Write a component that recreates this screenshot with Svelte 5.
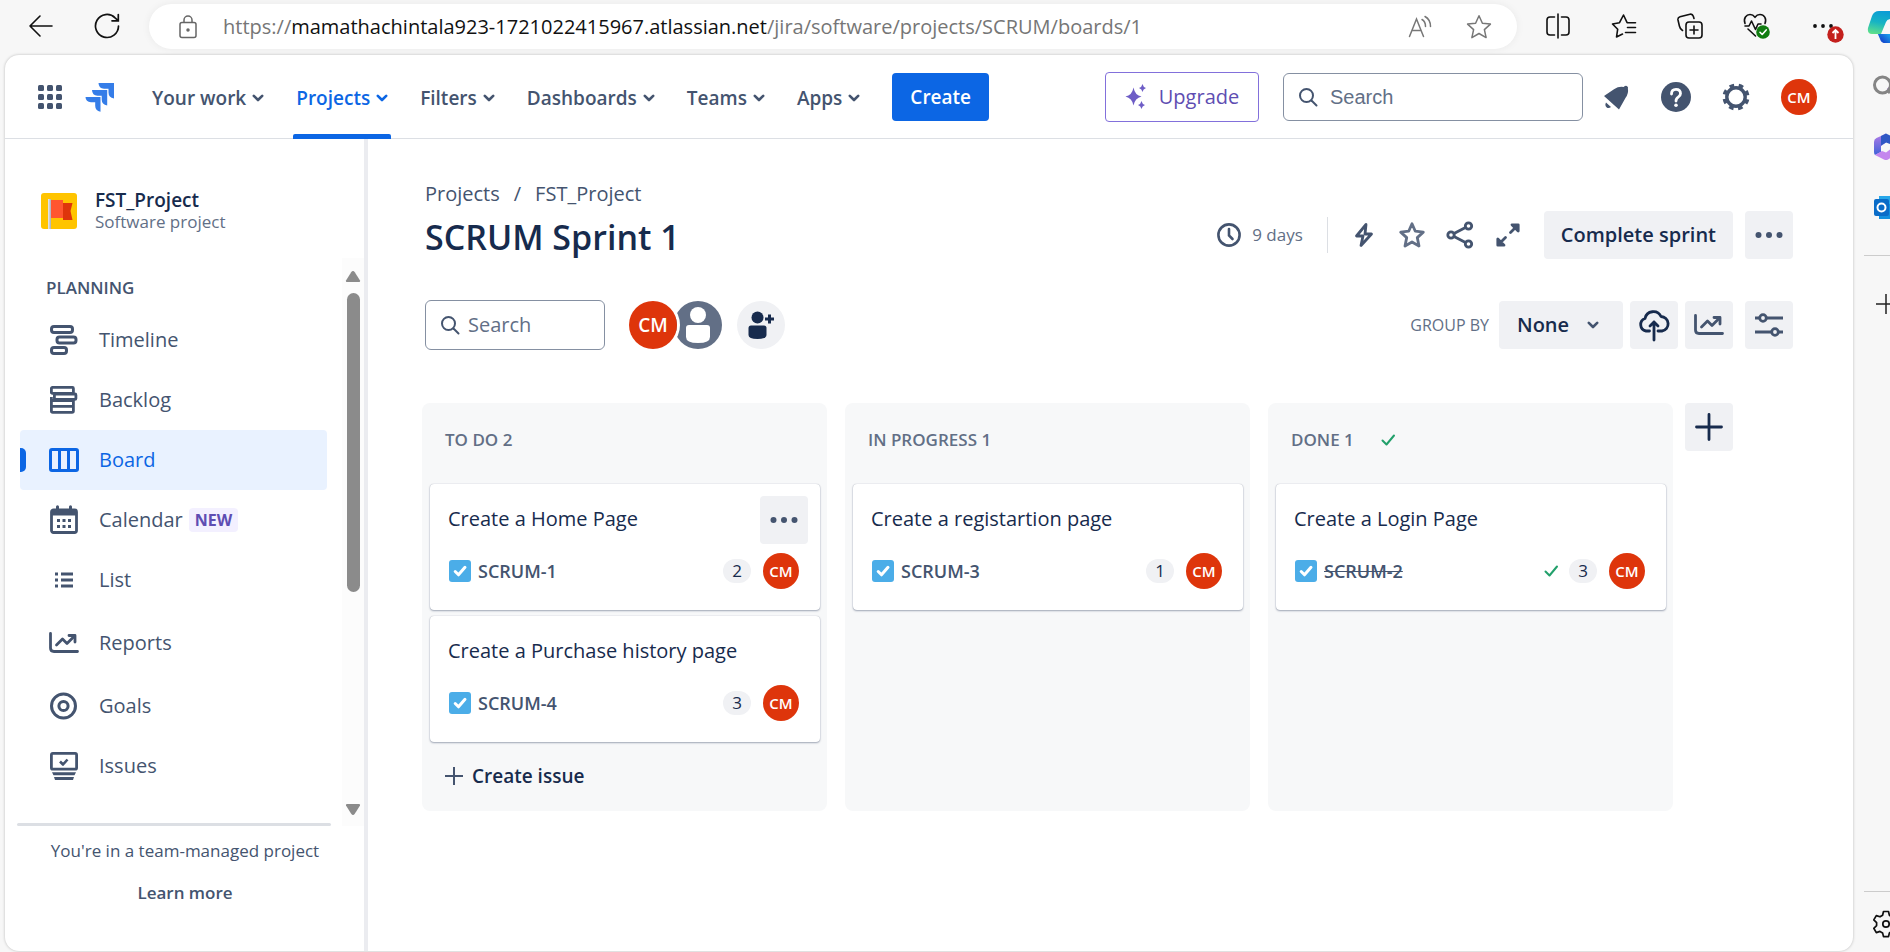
<script>
  const menus = [
    { label: 'Your work' },
    { label: 'Projects', active: true },
    { label: 'Filters' },
    { label: 'Dashboards' },
    { label: 'Teams' },
    { label: 'Apps' }
  ];

  const sections = [
    { label: 'Timeline', icon: 'timeline' },
    { label: 'Backlog', icon: 'backlog' },
    { label: 'Board', icon: 'board', active: true },
    { label: 'Calendar', icon: 'calendar', badge: 'NEW' },
    { label: 'List', icon: 'list' },
    { label: 'Reports', icon: 'reports', spaced: true },
    { label: 'Goals', icon: 'goals' },
    { label: 'Issues', icon: 'issues' }
  ];

  const columns = [
    {
      name: 'TO DO',
      create: true,
      cards: [
        { title: 'Create a Home Page', key: 'SCRUM-1', points: 2, menu: true },
        { title: 'Create a Purchase history page', key: 'SCRUM-4', points: 3 }
      ]
    },
    { name: 'IN PROGRESS', cards: [{ title: 'Create a registartion page', key: 'SCRUM-3', points: 1 }] },
    { name: 'DONE', done: true, cards: [{ title: 'Create a Login Page', key: 'SCRUM-2', points: 3, done: true }] }
  ];
</script>

{#snippet chevron()}
  <svg class="chevron" width="12" height="8" viewBox="0 0 12 8"><path d="M1.8 1.8 6 6l4.2-4.2" fill="none" stroke="currentColor" stroke-width="2.6" stroke-linecap="round" stroke-linejoin="round" /></svg>
{/snippet}

{#snippet dots()}
  <svg width="28" height="8" viewBox="0 0 28 8" fill="currentColor"><circle cx="3.5" cy="4" r="3" /><circle cx="14" cy="4" r="3" /><circle cx="24.5" cy="4" r="3" /></svg>
{/snippet}

{#snippet tick()}
  <svg width="16" height="16" viewBox="0 0 16 16"><path d="m2.500 8.500 4 4 7.500-9" fill="none" stroke="#22a06b" stroke-width="2" stroke-linecap="round" stroke-linejoin="round" /></svg>
{/snippet}

{#snippet chart()}
  <svg width="30" height="24" viewBox="0 0 30 24" fill="none" stroke="currentColor" stroke-width="2.8" stroke-linecap="round" stroke-linejoin="round"><path d="M1.500 2.500V17q0 3.500 3.500 3.500h23.500" /><path d="m7.500 14 6-6 4.500 4.500 7-7" /><path d="M20 4.500h6V11" /></svg>
{/snippet}

{#snippet magnifier()}
  <svg width="20" height="20" viewBox="0 0 20 20" fill="none" stroke="currentColor" stroke-width="2" stroke-linecap="round"><circle cx="8.5" cy="8.5" r="6.500" /><path d="m13.500 13.500 5 5" /></svg>
{/snippet}

{#snippet navIcon(name)}
  {#if name === 'reports'}
    {@render chart()}
  {:else}
    <svg width="30" height="30" viewBox="0 0 30 30" fill="none" stroke="currentColor" stroke-width="3" stroke-linejoin="round">
      {#if name === 'timeline'}
        <rect x="2.500" y="1.500" width="21" height="6" rx="2.500" /><rect x="8" y="12" width="19" height="6" rx="2.500" /><rect x="2.500" y="22.500" width="15" height="6" rx="2.500" />
      {:else if name === 'backlog'}
        <g stroke-width="2.8"><rect x="2.400" y="2.400" width="22" height="6" rx="1" /><rect x="5.400" y="9" width="21.500" height="5.400" rx="1" /><path d="M2.400 12v14q0 1.400 1.400 1.400H23q1.400 0 1.400-1.400V15M2.400 15.500H24M2.400 21.400h22" /></g>
      {:else if name === 'board'}
        <rect x="1.500" y="4.500" width="27" height="21" rx="1.500" /><path d="M10.500 4.500v21m9-21v21" />
      {:else if name === 'calendar'}
        <rect x="2.500" y="5" width="25" height="22.500" rx="2" stroke-width="2.8" /><path d="M3 7.500h24" stroke-width="6" /><path d="M8.500 1.800V6m13-4.200V6" stroke-linecap="round" /><path d="M8 15.500h3m2.500 0h3m2.500 0h3M8 21.500h3m2.500 0h3m2.500 0h3" />
      {:else if name === 'list'}
        <path d="M6 9h3M6 15h3M6 21h3M12 9h12m-12 6h12m-12 6h12" stroke-width="2.8" />
      {:else if name === 'goals'}
        <circle cx="14.500" cy="15" r="12" /><circle cx="14.500" cy="15" r="4.600" />
      {:else}
        <rect x="2.400" y="2.400" width="25.200" height="15.800" rx="1.500" stroke-width="2.8" /><path d="m11 10.500 3 3 4.500-5" stroke-width="2.600" /><path d="M3 21.300h24l-1.500 3h-21zM5 26h20l-1 3H6z" fill="currentColor" stroke="none" />
      {/if}
    </svg>
  {/if}
{/snippet}

{#snippet face()}
  <span class="face">CM</span>
{/snippet}

<div class="window">
  <header class="toolbar">
    <button class="tool" aria-label="Back"><svg width="26" height="26" viewBox="0 0 26 26" fill="none" stroke="#111" stroke-width="1.600" stroke-linecap="round" stroke-linejoin="round"><path d="M24 13H2M12 3 2 13l10 10" /></svg></button>
    <button class="tool" aria-label="Reload"><svg width="26" height="26" viewBox="0 0 26 26" fill="none" stroke="#111" stroke-width="1.700" stroke-linecap="round"><path d="M24.500 13a11.500 11.500 0 1 1-3.400-8.200L24 7.500M24.300 1.500v6.300H18" /></svg></button>
    <div class="address">
      <svg width="20" height="24" viewBox="0 0 20 24" fill="none" stroke="#666" stroke-width="1.500"><rect x="2" y="7.500" width="16" height="15" rx="2" /><path d="M6 7.500V5a4 4 0 0 1 8 0v2.500" /><circle cx="10" cy="15" r="1" fill="#666" /></svg>
      <span class="url">https://<b>mamathachintala923-1721022415967.atlassian.net</b>/jira/software/projects/SCRUM/boards/1</span>
      <button aria-label="Read aloud"><svg width="24" height="24" viewBox="0 0 24 24" fill="none" stroke="#777" stroke-width="1.500" stroke-linecap="round"><path d="M1.500 21.500 8.500 4l7 17.500M4 15.500h9M14 4.500q3.500 2 3.500 7M17 1.500q5.500 3 5.500 10" /></svg></button>
      <button aria-label="Add to favorites"><svg width="26" height="26" viewBox="0 0 26 26" fill="none" stroke="#777" stroke-width="1.500" stroke-linejoin="round"><path d="m13 1.800 3.400 7.400 8 .9-6 5.500 1.700 8L13 19.500l-7.100 4.100 1.700-8-6-5.500 8-.9z" /></svg></button>
    </div>
    <div class="tools">
      <button class="tool" aria-label="Split screen"><svg width="26" height="26" viewBox="0 0 26 26" fill="none" stroke="#111" stroke-width="1.600" stroke-linecap="round"><path d="M9.500 4H5Q2 4 2 7v12q0 3 3 3h4.500M16.500 4H21q3 0 3 3v12q0 3-3 3h-4.500M13 1v24" /></svg></button>
      <button class="tool" aria-label="Favorites"><svg width="26" height="26" viewBox="0 0 26 26" fill="none" stroke="#111" stroke-width="1.600" stroke-linecap="round" stroke-linejoin="round"><path d="M11.500 21 5.500 24l1.200-7.800L1.500 11l7-1.300L12.500 2l3.600 7.700h8.400M16.500 14.500h8M14.500 19.500h10" /></svg></button>
      <button class="tool" aria-label="Collections"><svg width="26" height="26" viewBox="0 0 26 26" fill="none" stroke="#111" stroke-width="1.600" stroke-linecap="round"><rect x="9" y="9" width="16" height="16" rx="3" /><path d="M17 13v8m-4-4h8M5.500 17.500Q3 16 2.400 13L1 7Q.5 4.500 3 3.800l10-2.600q2.500-.5 3.300 2l.7 2.300" /></svg></button>
      <button class="tool" aria-label="Browser essentials"><svg width="28" height="28" viewBox="0 0 28 28" fill="none" stroke="#111" stroke-width="1.600" stroke-linecap="round" stroke-linejoin="round"><path d="M3 11.500C1 6 4.500 2.500 8 2.500q3 0 5 2.800 2-2.800 5-2.800c4 0 7 4 5 9M3 14h4l2.500-5 4 8.500L16 12h3M6 17l7.500 7" /><circle cx="21" cy="20" r="6.800" fill="#107c10" stroke="none" /><path d="m18 20.300 2.200 2.200 4-4.600" stroke="#fff" /></svg></button>
      <button class="tool" aria-label="Settings and more"><svg width="48" height="34" viewBox="0 0 48 34"><g fill="#111"><circle cx="17" cy="17" r="1.900" /><circle cx="25" cy="17" r="1.900" /><circle cx="33" cy="17" r="1.900" /></g><circle cx="37.500" cy="25.500" r="8.200" fill="#c4201d" /><path d="M37.500 30v-9m-3 3 3-3 3 3" fill="none" stroke="#fff" stroke-width="1.800" /></svg></button>
    </div>
    <button class="copilot" aria-label="Copilot">
      <svg width="40" height="34" viewBox="0 0 40 34">
        <defs>
          <linearGradient id="lagoon" x1="0.5" y1="0" x2="0.2" y2="1"><stop offset="0" stop-color="#0a9bd6" /><stop offset="0.5" stop-color="#16b3c4" /><stop offset="1" stop-color="#5fe08a" /></linearGradient>
          <linearGradient id="deep" x1="0" y1="1" x2="1" y2="0.3"><stop offset="0" stop-color="#1438c8" /><stop offset="1" stop-color="#18aef0" /></linearGradient>
        </defs>
        <path d="M10 22h24v11H18q-4 0-5-4z" fill="url(#deep)" />
        <path d="M12 1h24l-9 23H5q-5 0-4-6L5 6q2-5 7-5z" fill="url(#lagoon)" />
        <path d="M14 24 19 12q1-3 5-3h9l-9 15z" fill="#f7f7f7" />
        <path d="M15 24h12v9h-9q-3 0-4-4z" fill="url(#deep)" />
      </svg>
    </button>
  </header>

  <div class="body">
    <div class="page">
      <nav class="topnav">
        <button class="plain switcher" aria-label="App switcher">
          <svg width="24" height="24" viewBox="0 0 24 24" fill="#44546f">
            {#each [0, 9, 18] as y}{#each [0, 9, 18] as x}<rect {x} {y} width="6" height="6" rx="1.500" />{/each}{/each}
          </svg>
        </button>
        <a class="logo" href="#home" aria-label="Jira">
          <svg width="30" height="30" viewBox="0 0 30 30" fill="#357de8"><path d="M13.500 1H29v15.500q-5.500-.8-5.500-6V6.800H19q-5.300-.3-5.500-5.800z" /><path d="M7 8h15.200v15.500q-5.500-.8-5.500-6v-3.700h-4.200Q7.200 13.500 7 8z" /><path d="M.5 15h15v14.800q-5.300-.8-5.300-6v-3.500H6Q.7 20 .5 15z" /></svg>
        </a>
        <div class="menus">
          {#each menus as m}
            <button class="menu" class:active={m.active}>{m.label}{@render chevron()}</button>
          {/each}
        </div>
        <button class="create">Create</button>
        <button class="upgrade">
          <svg width="22" height="26" viewBox="0 0 22 26" fill="#6e5dc6"><path d="M8.500 3.500q1.500 8 8 9-6.500 1.500-8 9-1.500-7.500-8-9 6.500-1 8-9z" /><path d="M17.500 0q.6 3 3.500 4-2.900 1-3.500 4-.6-3-3.500-4 2.900-1 3.500-4zM16.500 17q.6 3 3.500 4-2.900 1-3.500 4-.6-3-3.500-4 2.900-1 3.500-4z" /></svg>
          Upgrade
        </button>
        <label class="search global">{@render magnifier()}<input type="text" placeholder="Search" aria-label="Search" /></label>
        <button class="plain spot" aria-label="Notifications"><svg width="28" height="28" viewBox="0 0 28 28" fill="#44546f"><path d="M25.200 3.200q1.300 1.300.7 2.600.9 4.500-2.300 9L17 26.500 2 13l10-6.800q5-3.200 9.600-2.200 2.200-2 3.600-.8z" /><path d="M4 19.500 9 24q-2.500 2-4.500.2T4 19.500z" /></svg></button>
        <button class="plain spot" aria-label="Help"><svg width="30" height="30" viewBox="0 0 30 30"><circle cx="15" cy="15" r="15" fill="#44546f" /><path d="M10.500 12q0-4.700 4.500-4.700t4.500 4.200q0 2.200-2.300 3.600-2.200 1.300-2.200 4" fill="none" stroke="#fff" stroke-width="2.800" stroke-linecap="round" /><circle cx="15" cy="23.300" r="1.800" fill="#fff" /></svg></button>
        <button class="plain spot" aria-label="Settings">
          <svg width="28" height="28" viewBox="0 0 28 28" fill="none" stroke="#44546f"><circle cx="14" cy="14" r="9.200" stroke-width="3.400" /><circle cx="14" cy="14" r="11.800" stroke-width="3.400" stroke-dasharray="4.600 4.667" stroke-dashoffset="-2.400" /></svg>
        </button>
        <button class="plain profile" aria-label="Profile">{@render face()}</button>
      </nav>

      <div class="content">
        <aside class="side">
          <div class="project">
            <svg width="36" height="36" viewBox="0 0 36 36"><rect width="36" height="36" rx="3" fill="#ffc400" /><path d="M7 6h3v30H7z" fill="#dfe1e6" /><path d="M8.500 6H10v30H8.500z" fill="#b3bac5" /><path d="M22 10h9.500l-2 8 2 9h-9.500z" fill="#de350b" /><path d="M10 7h12v18H10z" fill="#ff5630" /></svg>
            <div><strong>FST_Project</strong><small>Software project</small></div>
          </div>
          <div class="scroller">
            <div class="sections">
              <h2>PLANNING</h2>
              {#each sections as s}
                <a class="section" class:active={s.active} class:spaced={s.spaced} href="#{s.icon}">
                  <span class="glyph">{@render navIcon(s.icon)}</span>{s.label}{#if s.badge}<span class="new">{s.badge}</span>{/if}
                </a>
              {/each}
            </div>
            <div class="track">
              <svg width="16" height="12" viewBox="0 0 16 12"><path d="M8 0q1 0 1.800 1.200L15 9.500q.6 1.500-1 1.500H2q-1.600 0-1-1.500l5.200-8.300Q7 0 8 0z" fill="#8b8b8b" /></svg>
              <span class="thumb"></span>
              <svg width="16" height="12" viewBox="0 0 16 12"><path d="M8 12q1 0 1.800-1.200L15 2.500Q15.600 1 14 1H2Q.4 1 1 2.500l5.200 8.300Q7 12 8 12z" fill="#8b8b8b" /></svg>
            </div>
          </div>
          <div class="managed">
            <span>You're in a team-managed project</span>
            <a href="#learn">Learn more</a>
          </div>
        </aside>

        <main>
          <div class="crumbs"><a href="#projects">Projects</a><span>/</span><a href="#project">FST_Project</a></div>
          <div class="heading">
            <h1>SCRUM Sprint 1</h1>
            <div class="days">
              <svg width="24" height="24" viewBox="0 0 24 24" fill="none" stroke="#44546f" stroke-width="2.600" stroke-linecap="round"><circle cx="12" cy="12" r="10.600" /><path d="M12 6v6.500l3.500 3.500" /></svg>
              9 days
            </div>
            <div class="marks">
              <button class="plain" aria-label="Automation"><svg width="24" height="26" viewBox="0 0 24 26" fill="none" stroke="#44546f" stroke-width="2.800" stroke-linejoin="round"><path d="M14 2.500 4.500 14H11l-2 9.500L19.500 12H13z" /></svg></button>
              <button class="plain" aria-label="Star"><svg width="28" height="28" viewBox="0 0 28 28" fill="none" stroke="#626f86" stroke-width="2.800" stroke-linejoin="round"><path d="m14 2.800 3.300 7.400 8 .9-6 5.500 1.700 8.400-7-4-7 4 1.700-8.400-6-5.500 8-.9z" /></svg></button>
              <button class="plain" aria-label="Share"><svg width="28" height="28" viewBox="0 0 28 28" fill="none" stroke="#44546f" stroke-width="2.800"><circle cx="5" cy="14" r="3.200" /><circle cx="22.500" cy="5" r="3.200" /><circle cx="22.500" cy="23" r="3.200" /><path d="m8 12.500 11.500-6M8 15.500l11.500 6" /></svg></button>
              <button class="plain" aria-label="Full screen"><svg width="26" height="26" viewBox="0 0 26 26" fill="none" stroke="#44546f" stroke-width="2.800" stroke-linecap="round" stroke-linejoin="round"><path d="m15.500 10.500 6-6M17 2.800h6.200V9zM10.500 15.500l-6 6M2.800 17v6.200H9z" /></svg></button>
            </div>
            <div class="actions">
              <button class="solid">Complete sprint</button>
              <button class="solid square" aria-label="More actions">{@render dots()}</button>
            </div>
          </div>

          <div class="filters">
            <label class="search local">{@render magnifier()}<input type="text" placeholder="Search" aria-label="Search board" /></label>
            <div class="people">
              <button class="plain big" aria-label="Filter by CM">{@render face()}</button>
              <button class="plain nobody" aria-label="Unassigned"><svg width="48" height="48" viewBox="0 0 48 48"><circle cx="24" cy="24" r="24" fill="#626f86" /><circle cx="24" cy="14" r="8" fill="#fff" /><path d="M12 27q0-3 3-3h18q3 0 3 3v9q0 6-12 6t-12-6z" fill="#fff" /></svg></button>
              <button class="plain invite" aria-label="Add people"><svg width="28" height="28" viewBox="0 0 28 28" fill="#172b4d"><circle cx="10.500" cy="6.500" r="6" /><path d="M1.500 17q0-2.500 2.500-2.500h13q2.500 0 2.500 2.500v7q0 4-9 4t-9-4z" /><path d="M22.500 3.500v9M18 8h9" stroke="#172b4d" stroke-width="3" /></svg></button>
            </div>
            <label class="group" for="group">GROUP BY</label>
            <div class="picker">
              <select id="group"><option>None</option></select>
              {@render chevron()}
            </div>
            <button class="solid square dark" aria-label="Releases"><svg width="32" height="34" viewBox="0 0 32 34" fill="none" stroke="currentColor" stroke-width="2.800" stroke-linecap="round" stroke-linejoin="round"><path d="M11.500 23H8a6.500 6.500 0 0 1-1-12.500A8.500 8.500 0 0 1 23 8.500 7.300 7.300 0 0 1 24 23h-4M16 32V14m-4 4 4-4 4 4" /></svg></button>
            <button class="solid square" aria-label="Insights">{@render chart()}</button>
            <button class="solid square last" aria-label="View settings"><svg width="28" height="26" viewBox="0 0 28 26" fill="none" stroke="currentColor" stroke-width="2.800"><path d="M0 6h4.500m7 0H28M0 20h16.500m7 0H28" /><circle cx="8" cy="6" r="3.300" /><circle cx="20" cy="20" r="3.300" /></svg></button>
          </div>

          <div class="board">
            {#each columns as c}
              <section class="column">
                <h3>{c.name} {c.cards.length}{#if c.done}{@render tick()}{/if}</h3>
                {#each c.cards as card}
                  <article class="card">
                    <div class="top">
                      <span>{card.title}</span>
                      {#if card.menu}<button class="solid square" aria-label="Card actions">{@render dots()}</button>{/if}
                    </div>
                    <div class="meta">
                      <svg width="22" height="22" viewBox="0 0 22 22"><rect width="22" height="22" rx="3" fill="#4bade8" /><path d="m6.200 11.500 3.300 3.300 6.500-7.500" fill="none" stroke="#fff" stroke-width="3" stroke-linecap="round" stroke-linejoin="round" /></svg>
                      <a href="#{card.key}" class:struck={card.done}>{card.key}</a>
                      {#if card.done}{@render tick()}{/if}
                      <span class="points">{card.points}</span>
                      {@render face()}
                    </div>
                  </article>
                {/each}
                {#if c.create}
                  <button class="plain issue"><svg width="18" height="18" viewBox="0 0 18 18" stroke="#44546f" stroke-width="2"><path d="M9 0v18M0 9h18" /></svg>Create issue</button>
                {/if}
              </section>
            {/each}
            <button class="solid square dark add" aria-label="Create column"><svg width="28" height="28" viewBox="0 0 28 28" stroke="currentColor" stroke-width="2.800" stroke-linecap="round"><path d="M14 1.500v25M1.500 14h25" /></svg></button>
          </div>
        </main>
      </div>
    </div>

    <aside class="dock">
      <button class="app" aria-label="Search"><svg width="26" height="26" viewBox="0 0 26 26" fill="none" stroke-width="3"><path d="m15 15 8 8" stroke="#a06bd0" /><circle cx="9.500" cy="12" r="8" stroke="#858585" /><path d="m14.500 17.500 2.500 2.500" stroke="#858585" /></svg></button>
      <button class="app" aria-label="Microsoft 365">
        <svg width="26" height="28" viewBox="0 0 26 28"><defs><linearGradient id="hex" x1="0" y1="0" x2="0" y2="1"><stop offset="0" stop-color="#b57be8" /><stop offset="1" stop-color="#3f63d8" /></linearGradient></defs><path d="M8 3 13 .5v9L8 13v6l-6 3q-1-1-1-3V9q0-3 2.500-4z" fill="url(#hex)" /><path d="m13 .5 9 4.500q3 1.500 3 4v8l-8-2V11l-4-1.500-5 3V3z" fill="#2f58c4" /><path d="m2 22 7-4 4 1.500 4-3 8 1q0 3-3 5l-7 4q-2 1-4 0z" fill="#c487ee" /></svg>
      </button>
      <button class="app" aria-label="Outlook"><svg width="26" height="26" viewBox="0 0 26 26"><path d="M6 1h18v12H6z" fill="#28a8ea" /><path d="M6 9h19v15H6z" fill="#1490df" /><rect x="1" y="4" width="15" height="17" rx="2" fill="#0a6cc8" /><circle cx="8.500" cy="12.500" r="4" fill="none" stroke="#fff" stroke-width="2" /></svg></button>
      <hr />
      <button class="app" aria-label="Customize"><svg width="22" height="22" viewBox="0 0 22 22" stroke="#222" stroke-width="1.500"><path d="M11 1v20M1 11h20" /></svg></button>
      <hr class="low" />
      <button class="app cog" aria-label="Dock settings"><svg width="26" height="28" viewBox="0 0 26 28" fill="none" stroke="#111" stroke-width="1.700" stroke-linejoin="round"><path d="M10.500 1.500h5l.9 3.800 2.600 1.500 3.700-1.200 2.500 4.300-2.800 2.700v3l2.800 2.700-2.500 4.300-3.700-1.200-2.600 1.500-.9 3.700h-5l-.9-3.700L7 21.400l-3.700 1.200L.8 18.300l2.800-2.700v-3L.8 9.900l2.500-4.300L7 6.800l2.600-1.500z" /><circle cx="13" cy="14" r="3.200" /></svg></button>
    </aside>
  </div>
</div>

<style>
  :global(body) {
    background: #f7f7f7;
  }
  .window,
  .window :global(*) {
    box-sizing: border-box;
  }
  .window {
    min-height: 100vh;
    display: flex;
    flex-direction: column;
    overflow: hidden;
    font-family: 'Open Sans', 'Noto Sans', sans-serif;
    font-size: 20px;
    line-height: 24px;
    color: #172b4d;
  }
  button,
  input,
  select {
    font: inherit;
    color: inherit;
    border: 0;
    padding: 0;
    background: none;
  }
  button,
  .glyph,
  .logo {
    display: flex;
    align-items: center;
    justify-content: center;
  }
  a {
    color: inherit;
    text-decoration: none;
  }
  svg {
    flex: none;
    display: block;
  }

  .toolbar {
    height: 54px;
    display: flex;
    align-items: flex-start;
    padding-left: 8px;
  }
  .tool {
    width: 66px;
    height: 52px;
    flex: none;
  }
  .address {
    flex: 1;
    min-width: 0;
    height: 45px;
    margin: 4px 8px 0 9px;
    padding: 0 25px 0 29px;
    display: flex;
    align-items: center;
    gap: 34px;
    background: #fff;
    border-radius: 23px;
    box-shadow: 0 0 8px rgba(0, 0, 0, 0.06);
  }
  .url {
    flex: 1;
    min-width: 0;
    overflow: hidden;
    white-space: nowrap;
    line-height: 32px;
    color: #767676;
    margin-left: -9px;
  }
  .url b {
    font-weight: 400;
    color: #111;
  }
  .tools {
    display: flex;
    flex: none;
  }
  .copilot {
    width: 35px;
    height: 54px;
    flex: none;
    justify-content: flex-start;
    padding-left: 12px;
    overflow: hidden;
  }

  .body {
    flex: 1;
    display: flex;
  }
  .page {
    flex: 1;
    min-width: 0;
    margin: 1px 0 1px 5px;
    display: flex;
    flex-direction: column;
    background: #fff;
    border-radius: 14px;
    box-shadow: 0 0 3px rgba(0, 0, 0, 0.25);
  }
  .topnav {
    height: 84px;
    display: flex;
    align-items: center;
    border-bottom: 1px solid #dcdfe4;
    color: #44546f;
    padding: 1px 0 0 33px;
    font-size: 19px;
  }
  .logo {
    margin: 0 34px 0 23px;
  }
  .menus {
    display: flex;
    align-self: stretch;
    gap: 26px;
  }
  .menu {
    position: relative;
    padding: 2px 3px 0;
    gap: 6px;
    font-weight: 600;
    white-space: nowrap;
  }
  .menu.active {
    color: #0c66e4;
  }
  .menu.active::after {
    content: '';
    position: absolute;
    left: 0;
    right: 0;
    bottom: -1px;
    height: 5px;
    background: #0c66e4;
    border-radius: 2px 2px 0 0;
  }
  .create {
    height: 48px;
    padding: 0 18px;
    margin-left: 29px;
    border-radius: 4px;
    background: #0c66e4;
    color: #fff;
    font-weight: 600;
  }
  .upgrade {
    height: 50px;
    width: 154px;
    margin-left: auto;
    gap: 12px;
    border: 1px solid #8270db;
    border-radius: 4px;
    color: #5e4db2;
    font-size: 20px;
  }
  .search {
    display: flex;
    align-items: center;
    border: 1px solid #8590a2;
    border-radius: 6px;
    color: #44546f;
  }
  .search input {
    width: 100%;
    min-width: 0;
    outline: none;
  }
  .search input::placeholder {
    color: #626f86;
    opacity: 1;
  }
  .global {
    width: 300px;
    height: 48px;
    margin: 0 3px 0 24px;
    padding: 0 14px;
    gap: 12px;
    font-family: 'Liberation Sans', sans-serif;
    font-size: 20px;
  }
  .plain {
    flex: none;
  }
  .spot {
    width: 60px;
    height: 60px;
  }
  .profile {
    margin: 0 36px 0 15px;
  }
  .face {
    width: 36px;
    height: 36px;
    flex: none;
    display: flex;
    align-items: center;
    justify-content: center;
    border-radius: 50%;
    background: #de350b;
    color: #fff;
    font-size: 15px;
    font-weight: 600;
  }

  .content {
    flex: 1;
    display: flex;
  }
  .side {
    width: 363px;
    flex: none;
    display: flex;
    flex-direction: column;
    border-right: 4px solid #ebecf0;
    color: #44546f;
  }
  .project {
    display: flex;
    align-items: center;
    gap: 18px;
    padding: 50px 0 25px 36px;
  }
  .project strong,
  .project small {
    display: block;
    line-height: 22px;
  }
  .project strong {
    font-size: 19px;
    font-weight: 600;
    color: #172b4d;
  }
  .project small {
    font-size: 17px;
    color: #626f86;
  }
  .scroller {
    flex: 1;
    display: flex;
  }
  .sections {
    flex: 1;
    padding: 18px 15px 28px;
  }
  h2 {
    margin: 0 0 10px 26px;
    font-size: 17px;
    font-weight: 600;
  }
  .section {
    position: relative;
    height: 60px;
    display: flex;
    align-items: center;
    padding-left: 29px;
    border-radius: 4px;
    overflow: hidden;
  }
  .section.spaced {
    margin: 3px 0;
  }
  .glyph {
    width: 30px;
    margin-right: 20px;
  }
  .section.active {
    color: #0c66e4;
    background: #e9f2ff;
  }
  .section.active::before {
    content: '';
    position: absolute;
    left: 0;
    width: 6px;
    height: 24px;
    background: #0c66e4;
    border-radius: 0 5px 5px 0;
  }
  .new {
    margin-left: 6px;
    padding: 0 6px;
    border-radius: 4px;
    background: #f3f0ff;
    color: #5e4db2;
    font-size: 16px;
    font-weight: 700;
  }
  .track {
    width: 22px;
    display: flex;
    flex-direction: column;
    align-items: center;
    padding: 13px 0 11px;
    background: #fcfcfc;
  }
  .thumb {
    width: 13px;
    height: 299px;
    margin: 10px 0 auto;
    border-radius: 7px;
    background: #8b8b8b;
  }
  .managed {
    position: relative;
    display: flex;
    flex-direction: column;
    align-items: center;
    gap: 18px;
    margin: 0 33px 0 12px;
    padding: 13px 0 46px 22px;
    font-size: 17px;
  }
  .managed::before {
    content: '';
    position: absolute;
    left: 0;
    right: 0;
    top: -3px;
    height: 3px;
    border-radius: 2px;
    background: #dcdfe4;
  }
  .managed span {
    white-space: nowrap;
  }
  .managed a {
    font-weight: 600;
  }

  main {
    flex: 1;
    min-width: 0;
    padding: 43px 60px 0 57px;
  }
  .crumbs {
    display: flex;
    gap: 14px;
    color: #44546f;
  }
  .heading {
    display: flex;
    align-items: center;
    height: 48px;
    margin-top: 5px;
  }
  h1 {
    margin: 0 auto 0 0;
    padding-top: 3px;
    font-size: 34px;
    line-height: 44px;
    font-weight: 600;
    white-space: nowrap;
  }
  .days {
    display: flex;
    align-items: center;
    gap: 11px;
    height: 36px;
    padding-right: 24px;
    border-right: 1px solid #dcdfe4;
    font-size: 17px;
    color: #626f86;
    white-space: nowrap;
  }
  .marks {
    display: flex;
    margin: 0 12px;
  }
  .marks button {
    width: 48px;
    height: 48px;
  }
  .actions {
    display: flex;
    gap: 12px;
  }
  .solid {
    height: 48px;
    padding: 0 17px;
    flex: none;
    border-radius: 4px;
    background: #f0f1f4;
    font-weight: 600;
  }
  .solid.square {
    width: 48px;
    padding: 0;
    color: #44546f;
  }
  .solid.dark {
    color: #172b4d;
  }
  .filters {
    display: flex;
    align-items: center;
    margin-top: 41px;
    height: 50px;
  }
  .local {
    width: 180px;
    height: 50px;
    padding: 0 14px;
    gap: 8px;
  }
  .people {
    display: flex;
    align-items: center;
    margin-left: 24px;
  }
  .big {
    position: relative;
    border-radius: 50%;
    box-shadow: 0 0 0 3px #fff;
  }
  .big .face {
    width: 48px;
    height: 48px;
    font-size: 19px;
  }
  .nobody {
    margin-left: -3px;
  }
  .invite {
    width: 48px;
    height: 48px;
    margin-left: 15px;
    border-radius: 50%;
    background: #f0f1f4;
  }
  .group {
    margin: 0 10px 0 auto;
    font-size: 16px;
    color: #626f86;
  }
  .picker {
    position: relative;
    margin-right: 7px;
  }
  .picker select {
    width: 124px;
    height: 48px;
    padding: 0 18px;
    appearance: none;
    border-radius: 4px;
    background: #f0f1f4;
    font-weight: 600;
  }
  .picker :global(.chevron) {
    position: absolute;
    right: 24px;
    top: 20px;
    color: #44546f;
    pointer-events: none;
  }
  .filters .solid {
    margin-right: 7px;
  }
  .filters .last {
    margin: 0 0 0 5px;
  }

  .board {
    display: flex;
    align-items: stretch;
    gap: 18px;
    margin: 53px 60px 40px -3px;
  }
  .column {
    flex: 1;
    min-width: 0;
    min-height: 408px;
    padding: 24px 7px 18px 8px;
    border-radius: 8px;
    background: #f7f8f9;
  }
  .add {
    margin-left: -6px;
  }
  h3 {
    display: flex;
    align-items: center;
    gap: 26px;
    height: 26px;
    margin: 0 0 31px 15px;
    font-size: 17px;
    font-weight: 600;
    color: #626f86;
  }
  .card {
    height: 126px;
    margin-bottom: 6px;
    padding: 12px 12px 0 18px;
    border-radius: 4px;
    background: #fff;
    box-shadow: 0 1px 2px rgba(9, 30, 66, 0.35), 0 0 1px rgba(9, 30, 66, 0.31);
  }
  .top {
    display: flex;
    align-items: center;
    justify-content: space-between;
    height: 48px;
  }
  .top span {
    padding-bottom: 2px;
  }
  .meta {
    display: flex;
    align-items: center;
    height: 36px;
    margin: 9px 9px 0 1px;
    font-size: 17px;
    color: #44546f;
  }
  .meta a {
    margin: 0 auto 0 7px;
    font-size: 18px;
    font-weight: 600;
  }
  .struck {
    text-decoration: line-through;
  }
  .points {
    min-width: 28px;
    margin: 0 12px 0 10px;
    border-radius: 12px;
    background: #f0f1f4;
    color: #172b4d;
    text-align: center;
  }
  .issue {
    margin: 22px 0 0 15px;
    gap: 9px;
    font-size: 19px;
    font-weight: 600;
  }

  .dock {
    width: 37px;
    flex: none;
    display: flex;
    flex-direction: column;
    overflow: hidden;
    padding: 1px 0 0 11px;
  }
  .app {
    width: 44px;
    height: 61px;
    flex: none;
  }
  .cog {
    height: 56px;
  }
  hr {
    width: 44px;
    margin: 17px 0;
    flex: none;
    border: 0;
    border-top: 1px solid #ccc;
  }
  .low {
    margin: auto 0 4px;
  }
</style>
